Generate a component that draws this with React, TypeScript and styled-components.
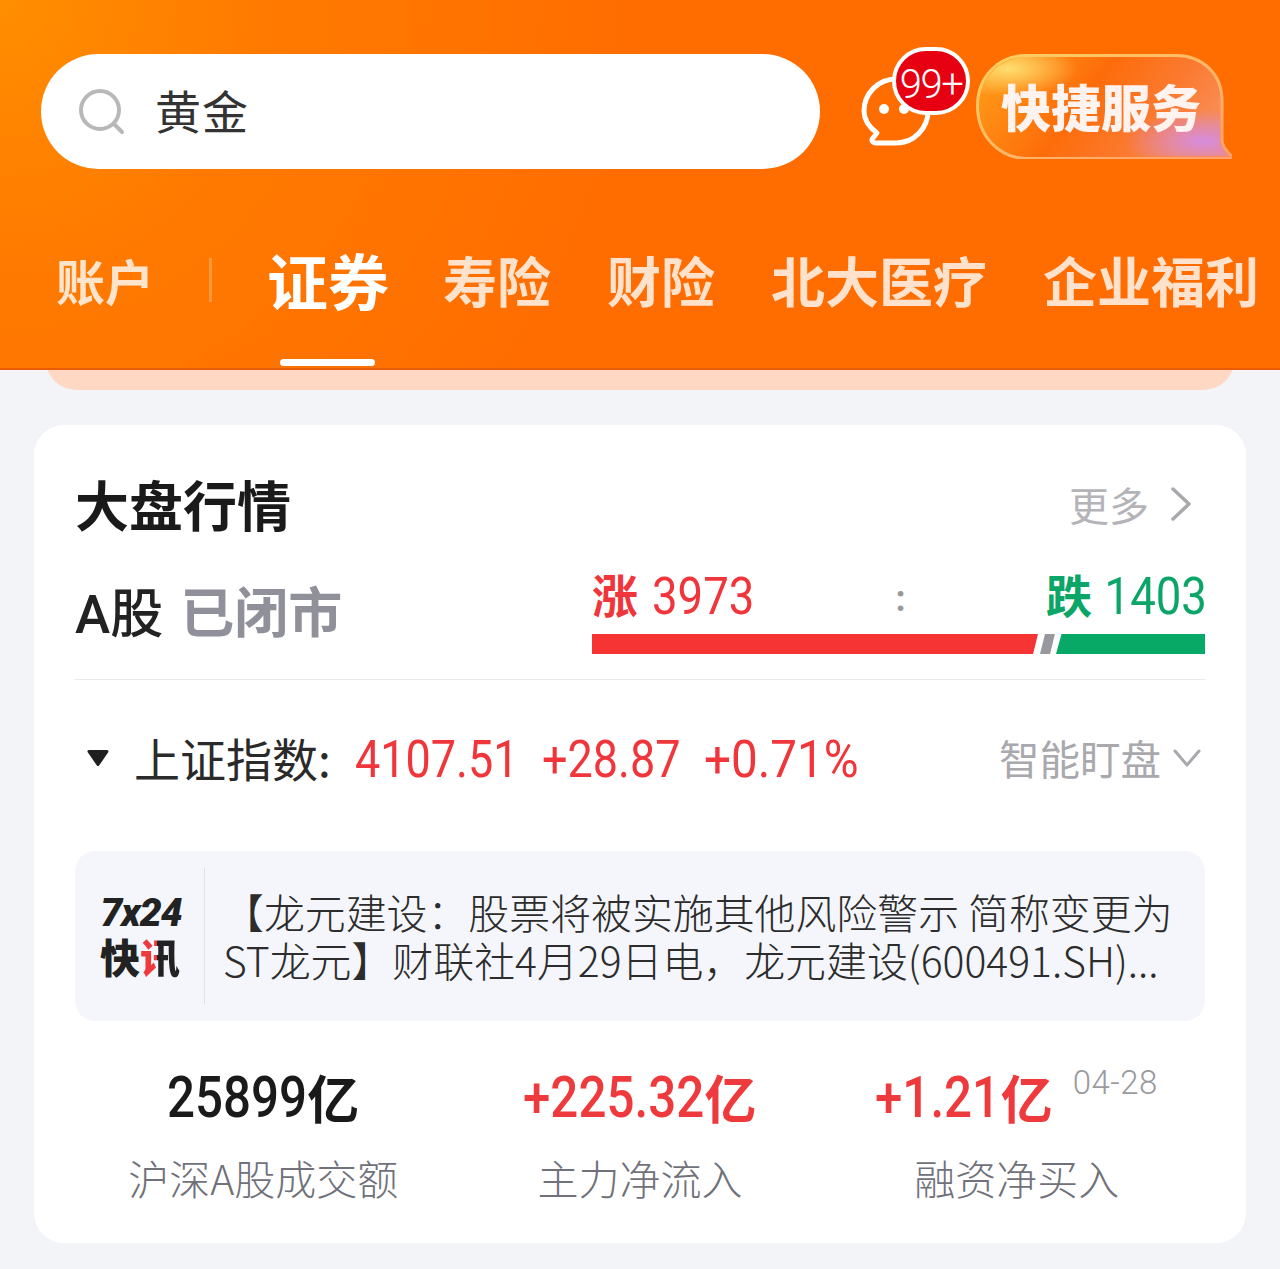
import React from "react";
import styled, { createGlobalStyle } from "styled-components";

const Global = createGlobalStyle`
  html, body { margin: 0; padding: 0; background: #f2f4f8; }
  body { font-family: "Noto Sans CJK SC", "Noto Sans", sans-serif; }
`;
const Page = styled.div`
  width: 1280px; height: 1269px; overflow: hidden; background: #f2f4f8; display: flex; flex-direction: column;
`;
const Header = styled.header`
  position: relative; z-index: 1;
  height: 370px; box-sizing: border-box; flex: none;
  background: radial-gradient(circle at 0 0, #ff8e00 0, #ff7a00 20%, #ff6c00 50%);
  border-bottom: 2px solid #e85c08; padding: 54px 0 0 41px; overflow: hidden;
`;
const TopRow = styled.div`display: flex; align-items: flex-start;`;
const Search = styled.div`
  width: 779px; height: 115px; border-radius: 58px; background: #fff; display: flex; align-items: center;
  padding-left: 38px; box-sizing: border-box; gap: 30px; flex: none;
`;
const SearchText = styled.span`font-size: 46px; color: #333; letter-spacing: 1px; line-height: 1; margin-top: -5px;`;
const MsgWrap = styled.div`position: relative; width: 110px; height: 115px; margin-left: 40px; flex: none;`;
const ChatIcon = styled.svg`position: absolute; left: 0; top: 0;`;
const Badge = styled.span`
  position: absolute; left: 32px; top: -7px; width: 78px; height: 68px; box-sizing: border-box; border-radius: 34px;
  background: #e60012; border: 4px solid #fff; color: #fff; font: 300 40px/67px "Roboto", sans-serif; text-align: center;
  white-space: nowrap; letter-spacing: -1.5px;
`;
const Quick = styled.div`
  position: relative; width: 256px; height: 105px; margin-left: 6px; flex: none; display: flex; align-items: center;
  justify-content: center; font-size: 50px; font-weight: 900; color: #fff3ef;
`;
const QuickBg = styled.svg`position: absolute; inset: 0;`;
const QuickLabel = styled.span`position: relative; margin: -4px 0 0 -6px; line-height: 1;`;
const Tabs = styled.nav`display: flex; align-items: center; margin: 61px 0 0 15px; height: 100px; white-space: nowrap;`;
const Tab = styled.span<{ $active?: boolean; $small?: boolean }>`
  position: relative; flex: none; font-weight: 700; line-height: 100px;
  font-size: ${(p) => (p.$active ? 61 : p.$small ? 49 : 54)}px;
  color: ${(p) => (p.$active ? "#fff" : "rgba(255,255,255,.8)")};
  margin-right: ${(p) => (p.$small ? 55 : p.$active ? 54 : 56)}px;
  ${(p) => p.$active && `
    &::after { content: ""; position: absolute; left: 13px; right: 14px; bottom: -36px; height: 7px; border-radius: 4px; background: #fff; }
  `}
`;
const TabSep = styled.i`flex: none; width: 3px; height: 44px; background: rgba(255,255,255,.25); margin: 0 55px 0 0;`;
const PeachStrip = styled.div`
  flex: none; height: 50px; margin: -30px 45px 0; background: #ffd8c4; border-radius: 0 0 32px 32px;
`;
const Card = styled.section`
  flex: none; margin: 35px 34px 0; height: 818px; box-sizing: border-box; background: #fff; border-radius: 30px; padding: 0 41px;
`;
const TitleRow = styled.div`display: flex; justify-content: space-between; align-items: center; padding-top: 39px;`;
const Title = styled.h2`margin: 0; font-size: 54px; line-height: 80px; font-weight: 700; color: #1a1a1a;`;
const More = styled.div`display: flex; align-items: center; gap: 20px; font-size: 40px; color: #b4b4b8; padding-right: 12px; line-height: 80px;`;
const MarketRow = styled.div`display: flex; justify-content: space-between; align-items: flex-start; height: 142px; border-bottom: 1px solid #e9e9ec; margin-top: -7px;`;
const MarketName = styled.div`font-size: 53px; line-height: 80px; font-weight: 500; color: #222; margin-top: 33px; display: flex; gap: 17px;`;
const Latin = styled.span`font-family: "Roboto", sans-serif;`;
const Closed = styled.span`color: #8f9099; font-weight: 700; font-size: 54px;`;
const Breadth = styled.div`width: 613px; flex: none;`;
const BreadthText = styled.div`display: flex; justify-content: space-between; align-items: center; height: 58px; margin-top: 30px; font-size: 46px; font-weight: 700;`;
const Up = styled.span`color: #f0353b; display: flex; align-items: center; gap: 14px;`;
const Down = styled.span`color: #0aa567; display: flex; align-items: center; gap: 14px;`;
const Sign = styled.span`margin-top: -7px;`;
const Num = styled.span<{ $end?: boolean }>`
  display: inline-block; font: 400 52px "Roboto", sans-serif; transform: scaleX(.875);
  transform-origin: ${(p) => (p.$end ? "right" : "left")} center;
  ${(p) => (p.$end ? "margin: 0 -2px 0 -16px;" : "margin-right: -14px;")}
`;
const Colon = styled.span`color: #999; font: 700 36px "Roboto", sans-serif; margin-top: 6px;`;
const Bar = styled.div`display: flex; height: 20px; margin-top: 9px;`;
const Seg = styled.div<{ $w: number; $c: string; $clip: string }>`
  width: ${(p) => p.$w}px; background: ${(p) => p.$c}; clip-path: ${(p) => p.$clip}; flex: none;
`;
const IndexRow = styled.div`display: flex; align-items: center; height: 158px; box-sizing: border-box;`;
const Tri = styled.svg`flex: none; margin: -3px 25px 0 12px;`;
const IndexName = styled.span`font-size: 46px; color: #2a2a2a; margin-right: 24px; white-space: nowrap; margin-top: -4px;`;
const IndexVal = styled.span<{ $sx: number; $gap: number }>`
  display: inline-block; font: 400 52px "Roboto", sans-serif; color: #f0353b; margin-right: ${(p) => p.$gap}px; white-space: nowrap;
  transform: scaleX(${(p) => p.$sx}); transform-origin: left center;
`;
const Smart = styled.div`margin-left: auto; font-size: 40.5px; color: #a8a8ad; display: flex; align-items: center; gap: 12px; padding-right: 4px; margin-top: -3px;`;
const News = styled.div`
  height: 170px; margin-top: 13px; background: #f4f6fb; border-radius: 20px; display: flex; align-items: stretch; box-sizing: border-box; padding: 17px 0;
`;
const Logo = styled.div`
  width: 130px; flex: none; box-sizing: border-box; border-right: 1px solid #dfe1e6; display: flex; flex-direction: column; align-items: center; justify-content: center;
  color: #222; padding-bottom: 6px;
`;
const LogoTop = styled.div`font: italic 900 39px/46px "Roboto", sans-serif; letter-spacing: -1px; margin-left: 3px;`;
const LogoBottom = styled.div`font-size: 40px; line-height: 40px; font-weight: 900; margin-left: 1px;`;
const RedPart = styled.span`
  background: linear-gradient(90deg, #ef3a3d 42%, #222 42%); -webkit-background-clip: text; background-clip: text; color: transparent;
`;
const NewsText = styled.div`padding: 0 0 0 18px; font-size: 40.9px; line-height: 48px; color: #2c2c2c; font-weight: 300; white-space: nowrap; align-self: center;`;
const NewsLine = styled.div``;
const Stats = styled.div`display: grid; grid-template-columns: repeat(3, 1fr); margin-top: 42px;`;
const Stat = styled.div`display: flex; flex-direction: column; align-items: center;`;
const ValueRow = styled.div`display: flex; align-items: flex-start;`;
const StatVal = styled.div<{ $red?: boolean }>`
  display: flex; color: ${(p) => (p.$red ? "#ef3a3d" : "#1a1a1a")}; white-space: nowrap; line-height: 68px;
`;
const StatNum = styled.span<{ $trim: number }>`
  display: inline-block; font: 500 58px/68px "Roboto", sans-serif; transform: scaleX(.85); transform-origin: left center;
  margin-right: ${(p) => -p.$trim}px;
`;
const Unit = styled.span`font: 700 52px/68px "Noto Sans CJK SC", sans-serif;`;
const StatLabel = styled.div`font-size: 41px; line-height: 56px; margin-top: 18px; color: #70717a; font-weight: 300; white-space: nowrap;`;
const DateTag = styled.span`margin: 0 0 0 20px; font: 300 33px/40px "Roboto", sans-serif; color: #9a9a9f; letter-spacing: 0.5px;`;

export default function App() {
  return (
    <Page>
      <Global />
      <Header>
        <TopRow>
          <Search>
            <svg width="46" height="46" viewBox="0 0 46 46" fill="none" stroke="#b8b8b8" strokeWidth="4" strokeLinecap="round">
              <circle cx="21" cy="21" r="19" />
              <path d="M35 35l8 8" />
            </svg>
            <SearchText>黄金</SearchText>
          </Search>
          <MsgWrap>
            <ChatIcon width="80" height="100" viewBox="0 0 80 100" fill="none">
              <path d="M2 57a32 32 0 1 1 32 32H14c-4 0-5-3-3-5l4-5C7 73 2 66 2 57z" stroke="#fff" strokeWidth="5" strokeLinejoin="round" transform="translate(2,0)" />
              <circle cx="24" cy="55" r="5" fill="#fff" />
              <circle cx="44" cy="55" r="5" fill="#fff" />
            </ChatIcon>
            <Badge>99+</Badge>
          </MsgWrap>
          <Quick>
            <QuickBg width="256" height="105" viewBox="0 0 256 105">
              <defs>
                <linearGradient id="qb" x1="0" y1="0" x2="1" y2="0.3">
                  <stop offset="0" stopColor="#ffa21a" />
                  <stop offset="0.5" stopColor="#fd6c0a" />
                  <stop offset="0.8" stopColor="#fb7a30" />
                  <stop offset="1" stopColor="#f98a50" />
                </linearGradient>
                <linearGradient id="qe" x1="0" y1="0" x2="1" y2="1">
                  <stop offset="0" stopColor="#ffd060" />
                  <stop offset="1" stopColor="#ffa070" />
                </linearGradient>
                <radialGradient id="qp" cx="0.9" cy="0.85" r="0.32">
                  <stop offset="0" stopColor="#d58ce0" />
                  <stop offset="1" stopColor="#d58ce0" stopOpacity="0" />
                </radialGradient>
                <radialGradient id="qy" cx="0.12" cy="0.12" r="0.28">
                  <stop offset="0" stopColor="#ffdd70" />
                  <stop offset="1" stopColor="#ffdd70" stopOpacity="0" />
                </radialGradient>
              </defs>
              <path d="M50 1.5h150c26 0 46 18 46 45v40c0 5 5 11 9 15c1 1 0 3-2 3H50C23 104 1.5 82 1.5 52S23 1.5 50 1.5z" fill="url(#qb)" stroke="url(#qe)" strokeWidth="3" />
              <path d="M50 3h150c26 0 44 18 44 44v40c0 5 5 10 8 15H50C24 102 3 80 3 52S24 3 50 3z" fill="url(#qp)" />
              <path d="M50 3h150c26 0 44 18 44 44v40c0 5 5 10 8 15H50C24 102 3 80 3 52S24 3 50 3z" fill="url(#qy)" />
            </QuickBg>
            <QuickLabel>快捷服务</QuickLabel>
          </Quick>
        </TopRow>
        <Tabs>
          <Tab $small>账户</Tab>
          <TabSep />
          <Tab $active>证券</Tab>
          <Tab>寿险</Tab>
          <Tab>财险</Tab>
          <Tab>北大医疗</Tab>
          <Tab>企业福利</Tab>
        </Tabs>
      </Header>
      <PeachStrip />
      <Card>
        <TitleRow>
          <Title>大盘行情</Title>
          <More>
            更多
            <svg width="24" height="36" viewBox="0 0 24 36" fill="none" stroke="#a8a8ad" strokeWidth="3.5" strokeLinecap="round" strokeLinejoin="round">
              <path d="M4 3l16 15L4 33" />
            </svg>
          </More>
        </TitleRow>
        <MarketRow>
          <MarketName>
            <span><Latin>A</Latin>股</span>
            <Closed>已闭市</Closed>
          </MarketName>
          <Breadth>
            <BreadthText>
              <Up><Sign>涨</Sign><Num>3973</Num></Up>
              <Colon>:</Colon>
              <Down><Sign>跌</Sign><Num $end>1403</Num></Down>
            </BreadthText>
            <Bar>
              <Seg $w={446} $c="#f73434" $clip="polygon(0 0,100% 0,98.9% 100%,0 100%)" />
              <Seg $w={18} $c="#98989f" $clip="polygon(39% 0,94% 0,67% 100%,11% 100%)" />
              <Seg $w={149} $c="#08a866" $clip="polygon(3.7% 0,100% 0,100% 100%,0 100%)" />
            </Bar>
          </Breadth>
        </MarketRow>
        <IndexRow>
          <Tri width="22" height="16" viewBox="0 0 22 16"><path d="M2 1.5h18L11 14.5z" fill="#1f1f1f" stroke="#1f1f1f" strokeWidth="3" strokeLinejoin="round" /></Tri>
          <IndexName>上证指数:</IndexName>
          <IndexVal $sx={0.865} $gap={-2}>4107.51</IndexVal>
          <IndexVal $sx={0.865} $gap={2}>+28.87</IndexVal>
          <IndexVal $sx={0.915} $gap={0}>+0.71%</IndexVal>
          <Smart>
            智能盯盘
            <svg width="28" height="20" viewBox="0 0 28 20" fill="none" stroke="#a8a8ad" strokeWidth="3" strokeLinecap="round" strokeLinejoin="round"><path d="M2 3l12 14L26 3" /></svg>
          </Smart>
        </IndexRow>
        <News>
          <Logo>
            <LogoTop>7x24</LogoTop>
            <LogoBottom>快<RedPart>讯</RedPart></LogoBottom>
          </Logo>
          <NewsText>
            <NewsLine>【龙元建设：股票将被实施其他风险警示 简称变更为</NewsLine>
            <NewsLine>ST龙元】财联社4月29日电，龙元建设(600491.SH)...</NewsLine>
          </NewsText>
        </News>
        <Stats>
          <Stat>
            <StatVal><StatNum $trim={25}>25899</StatNum><Unit>亿</Unit></StatVal>
            <StatLabel>沪深A股成交额</StatLabel>
          </Stat>
          <Stat>
            <StatVal $red><StatNum $trim={32}>+225.32</StatNum><Unit>亿</Unit></StatVal>
            <StatLabel>主力净流入</StatLabel>
          </Stat>
          <Stat>
            <ValueRow>
              <StatVal $red><StatNum $trim={22}>+1.21</StatNum><Unit>亿</Unit></StatVal>
              <DateTag>04-28</DateTag>
            </ValueRow>
            <StatLabel>融资净买入</StatLabel>
          </Stat>
        </Stats>
      </Card>
    </Page>
  );
}
